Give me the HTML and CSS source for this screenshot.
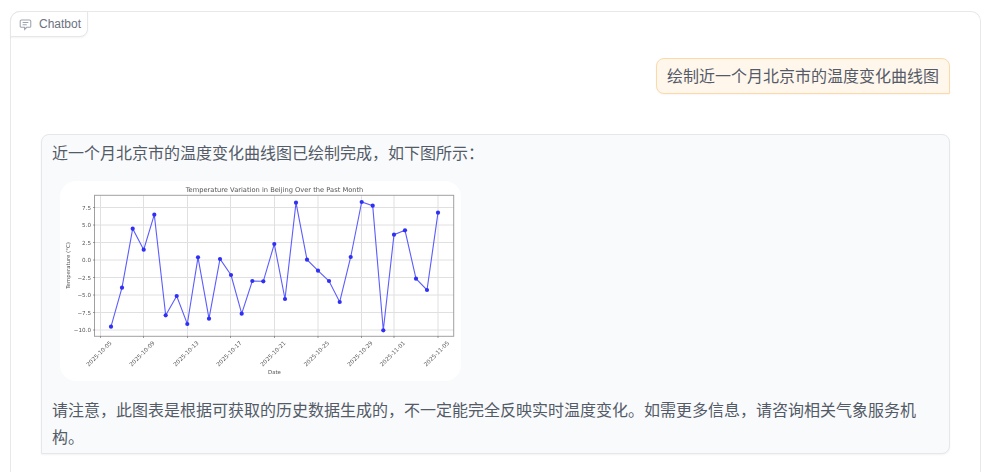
FILE: index.html
```html
<!DOCTYPE html>
<html lang="zh-CN">
<head>
<meta charset="utf-8">
<title>Chatbot</title>
<link rel="stylesheet" href="styles.css">
</head>
<body>
<div class="block">
  <div class="label">
    <svg class="label-icon" viewBox="0 0 16 16" width="13" height="13"><path d="M3 2.5h10a1.5 1.5 0 0 1 1.5 1.5v6a1.5 1.5 0 0 1-1.5 1.5H9.5L7 14v-2.500H3A1.500 1.500 0 0 1 1.500 10V4A1.500 1.500 0 0 1 3 2.500z"/><path d="M4.500 5.500h7M4.500 8.300h5"/></svg>
    <span>Chatbot</span>
  </div>
  <div class="chat">
    <div class="msg user">绘制近一个月北京市的温度变化曲线图</div>
    <div class="msg bot">
      <p>近一个月北京市的温度变化曲线图已绘制完成，如下图所示：</p>
      <div class="figure">
        <svg class="chart" viewBox="60 181 401 200" width="401" height="200">
          <g class="grid">
            <path d="M100.500 195V336M143.500 195V336M187.500 195V336M230.500 195V336M274.500 195V336M318 195V336M361.500 195V336M394 195V336M438 195V336"/>
            <path d="M95 207.500H454M95 225H454M95 242.500H454M95 260H454M95 277.500H454M95 295H454M95 312.500H454M95 330H454"/>
          </g>
          <rect class="frame" x="94.500" y="195.300" width="359.200" height="141"/>
          <path class="ticks" d="M100.500 336v2M143.500 336v2M187.500 336v2M230.500 336v2M274.500 336v2M318 336v2M361.500 336v2M394 336v2M438 336v2M93 207.500h2M93 225h2M93 242.500h2M93 260h2M93 277.500h2M93 295h2M93 312.500h2M93 330h2"/>
          <polyline class="series" points="111,326.700 122,287.700 132.700,228.700 143.700,249.700 154.300,214.700 165.700,315.300 176.700,296 187.300,324 198,257.300 209,318.700 220,259 231,275 241.700,313.700 252.300,281 263.300,281.300 274.300,244 285,299 296,202.700 307,259.700 318,270.700 329,281 339.700,302 350.700,257 361.700,202 372.700,205.700 383.300,330.300 394,234.700 405,230.300 416,278.700 427,290 438,212.700"/>
          <g class="dots">
            <circle cx="111" cy="326.700" r="2.100"/><circle cx="122" cy="287.700" r="2.100"/><circle cx="132.700" cy="228.700" r="2.100"/><circle cx="143.700" cy="249.700" r="2.100"/><circle cx="154.300" cy="214.700" r="2.100"/><circle cx="165.700" cy="315.300" r="2.100"/><circle cx="176.700" cy="296" r="2.100"/><circle cx="187.300" cy="324" r="2.100"/><circle cx="198" cy="257.300" r="2.100"/><circle cx="209" cy="318.700" r="2.100"/><circle cx="220" cy="259" r="2.100"/><circle cx="231" cy="275" r="2.100"/><circle cx="241.700" cy="313.700" r="2.100"/><circle cx="252.300" cy="281" r="2.100"/><circle cx="263.300" cy="281.300" r="2.100"/><circle cx="274.300" cy="244" r="2.100"/><circle cx="285" cy="299" r="2.100"/><circle cx="296" cy="202.700" r="2.100"/><circle cx="307" cy="259.700" r="2.100"/><circle cx="318" cy="270.700" r="2.100"/><circle cx="329" cy="281" r="2.100"/><circle cx="339.700" cy="302" r="2.100"/><circle cx="350.700" cy="257" r="2.100"/><circle cx="361.700" cy="202" r="2.100"/><circle cx="372.700" cy="205.700" r="2.100"/><circle cx="383.300" cy="330.300" r="2.100"/><circle cx="394" cy="234.700" r="2.100"/><circle cx="405" cy="230.300" r="2.100"/><circle cx="416" cy="278.700" r="2.100"/><circle cx="427" cy="290" r="2.100"/><circle cx="438" cy="212.700" r="2.100"/>
          </g>
          <text class="title" x="274.500" y="192">Temperature Variation in Beijing Over the Past Month</text>
          <g class="ylabels">
            <text x="91" y="209.500">7.5</text><text x="91" y="227">5.0</text><text x="91" y="244.500">2.5</text><text x="91" y="262">0.0</text><text x="91" y="279.500">−2.5</text><text x="91" y="297">−5.0</text><text x="91" y="314.500">−7.5</text><text x="91" y="332">−10.0</text>
          </g>
          <g class="xlabels">
            <text transform="translate(100.500 355) rotate(-45)">2025-10-05</text>
            <text transform="translate(143.500 355) rotate(-45)">2025-10-09</text>
            <text transform="translate(187.500 355) rotate(-45)">2025-10-13</text>
            <text transform="translate(230.500 355) rotate(-45)">2025-10-17</text>
            <text transform="translate(274.500 355) rotate(-45)">2025-10-21</text>
            <text transform="translate(318 355) rotate(-45)">2025-10-25</text>
            <text transform="translate(361.500 355) rotate(-45)">2025-10-29</text>
            <text transform="translate(394 355) rotate(-45)">2025-11-01</text>
            <text transform="translate(438 355) rotate(-45)">2025-11-05</text>
          </g>
          <text class="axis-name" x="274.500" y="374">Date</text>
          <text class="axis-name" transform="translate(69.500 265.500) rotate(-90)">Temperature (°C)</text>
        </svg>
      </div>
      <p>请注意，此图表是根据可获取的历史数据生成的，不一定能完全反映实时温度变化。如需更多信息，请咨询相关气象服务机构。</p>
    </div>
  </div>
</div>
</body>
</html>
```
FILE: styles.css
```css
html, body {
  margin: 0;
  height: 472px;
  overflow: hidden;
  background: #fff;
}
body {
  padding: 11px 9px 0 10px;
  box-sizing: border-box;
  font-family: "Noto Sans CJK SC", "Liberation Sans", sans-serif;
}
.block {
  height: 461px;
  border: 1px solid #e7e8ec;
  border-bottom: 0;
  border-radius: 10px 10px 0 0;
  box-sizing: border-box;
}
.label {
  width: 78px;
  height: 26px;
  margin: -1px 0 0 -1px;
  box-sizing: border-box;
  display: flex;
  align-items: center;
  gap: 7px;
  padding-left: 8px;
  border: 1px solid #e5e7eb;
  border-radius: 10px 0 8px 0;
  box-shadow: 0 1px 2px rgba(0, 0, 0, 0.05);
  background: #fff;
  font: 12px "Liberation Sans", Arial, sans-serif;
  color: #6b7280;
}
.label-icon {
  fill: none;
  stroke: #9ca3af;
  stroke-width: 1.3;
}
.chat {
  display: flex;
  flex-direction: column;
  align-items: flex-end;
  gap: 40px;
  padding: 21px 30px 0 30px;
}
.msg {
  box-sizing: border-box;
  color: #535b68;
  font-size: 16px;
  line-height: 27px;
}
.user {
  height: 36px;
  padding: 3px 10px;
  background: #fff6ec;
  border: 1px solid #fdd9a8;
  border-radius: 8px 8px 0 8px;
  box-shadow: 0 1px 2px rgba(0, 0, 0, 0.04);
}
.bot {
  width: 909px;
  height: 320px;
  padding: 4px 10px;
  background: #f9fafb;
  border: 1px solid #e5e7eb;
  border-radius: 8px 8px 8px 0;
  box-shadow: 0 1px 2px rgba(0, 0, 0, 0.05);
}
.bot p {
  margin: 0;
}
.figure {
  width: 401px;
  height: 200px;
  margin: 15px 0 15px 8px;
  background: #fff;
  border-radius: 16px;
}
.chart {
  display: block;
  filter: blur(0.35px);
}
.grid path {
  fill: none;
  stroke: #e0e0e0;
  stroke-width: 1;
}
.frame {
  fill: none;
  stroke: #a0a0a0;
  stroke-width: 1;
}
.ticks {
  fill: none;
  stroke: #777;
  stroke-width: 0.7;
}
.series {
  fill: none;
  stroke: #5c5cff;
  stroke-width: 1.1;
}
.dots circle {
  fill: #3030f5;
}
.chart text {
  font-family: "DejaVu Sans", sans-serif;
  fill: #555;
}
.title {
  font-size: 6.7px;
  text-anchor: middle;
}
.ylabels text {
  font-size: 5.6px;
  text-anchor: end;
}
.xlabels text {
  font-size: 5.7px;
  text-anchor: middle;
}
.axis-name {
  font-size: 5.4px;
  text-anchor: middle;
}
```
